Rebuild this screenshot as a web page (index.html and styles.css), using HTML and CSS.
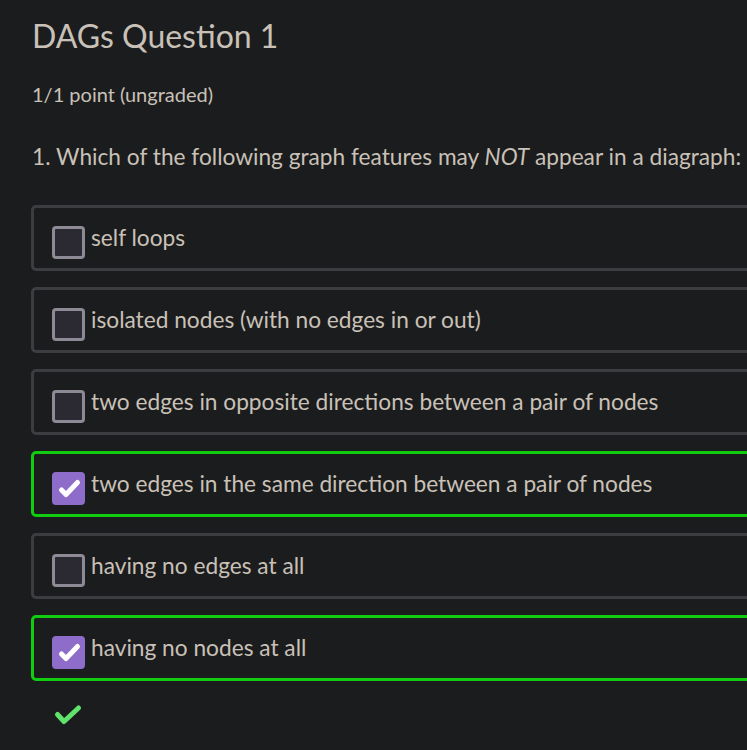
FILE: index.html
```html
<!DOCTYPE html>
<html>
<head>
<meta charset="utf-8">
<link rel="stylesheet" href="styles.css">
</head>
<body>
<div class="page">
  <h1 class="title">DAGs Question 1</h1>
  <p class="points">1/1 point (ungraded)</p>
  <p class="question">1. Which of the following graph features may <em>NOT</em> appear in a diagraph:</p>
  <div class="options">
    <label class="option"><span class="box"></span><span class="text">self loops</span></label>
    <label class="option"><span class="box"></span><span class="text">isolated nodes (with no edges in or out)</span></label>
    <label class="option"><span class="box"></span><span class="text">two edges in opposite directions between a pair of nodes</span></label>
    <label class="option correct"><span class="box checked"><svg viewBox="0 0 33 33" width="33" height="33"><path d="M9.5 18 L14 22.5 L25.5 10.5" fill="none" stroke="#fff" stroke-width="5" stroke-linecap="round" stroke-linejoin="round"/></svg></span><span class="text">two edges in the same direction between a pair of nodes</span></label>
    <label class="option"><span class="box"></span><span class="text">having no edges at all</span></label>
    <label class="option correct"><span class="box checked"><svg viewBox="0 0 33 33" width="33" height="33"><path d="M9.5 18 L14 22.5 L25.5 10.5" fill="none" stroke="#fff" stroke-width="5" stroke-linecap="round" stroke-linejoin="round"/></svg></span><span class="text">having no nodes at all</span></label>
  </div>
  <div class="result"><svg viewBox="0 0 30 24" width="30" height="24"><path d="M4.5 11.5 L11 18.5 L25.5 5" fill="none" stroke="#5fe36b" stroke-width="5" stroke-linecap="round" stroke-linejoin="round"/></svg></div>
</div>
</body>
</html>
```
FILE: styles.css
```css
html, body {
  margin: 0;
  padding: 0;
  background: #1b1c1e;
}
.page {
  padding: 16px 0 0 32px;
  font-family: Lato, "Liberation Sans", sans-serif;
  color: #c9c1b7;
  width: 747px;
  height: 750px;
  box-sizing: border-box;
  overflow: hidden;
}
.title {
  margin: 0;
  font-size: 32px;
  font-weight: 400;
  line-height: 40px;
}
.points {
  margin: 26px 0 0;
  font-size: 20px;
  line-height: 24px;
}
.question {
  margin: 37px 0 0;
  font-size: 22.7px;
  line-height: 28px;
  white-space: nowrap;
}
.question em { font-style: italic; }
.options {
  margin: 34px 0 0 -1px;
  display: flex;
  flex-direction: column;
  gap: 16px;
  width: 760px;
}
.option {
  display: flex;
  align-items: flex-start;
  height: 66px;
  box-sizing: border-box;
  border: 3px solid #3c3d40;
  border-radius: 5px;
  padding: 16px 0 0 18px;
  flex: none;
}
.option.correct { border-color: #12cc12; }
.box {
  width: 27px;
  height: 27px;
  margin-top: 2px;
  border: 3px solid #8d8a95;
  background: #2b2a33;
  border-radius: 4px;
  margin-right: 6px;
  flex: none;
  position: relative;
}
.box.checked {
  background: #8d6dc9;
  border-color: #8d6dc9;
}
.box svg { position: absolute; left: -3px; top: -3px; }
.text {
  font-size: 22.7px;
  line-height: 28px;
  white-space: nowrap;
}
.result {
  margin: 22px 0 0 21px;
  height: 24px;
}
.result svg { display: block; }
```
